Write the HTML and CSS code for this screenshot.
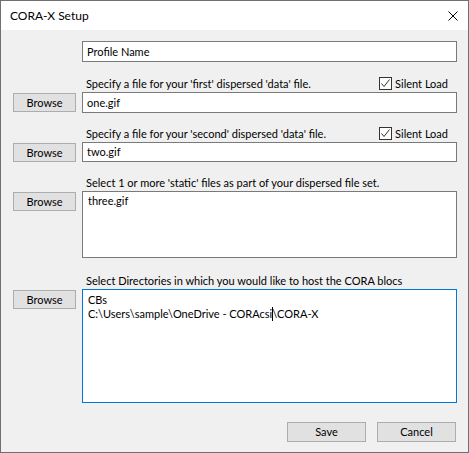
FILE: index.html
```html
<!DOCTYPE html>
<html>
<head>
<meta charset="utf-8">
<link rel="stylesheet" href="styles.css">
</head>
<body>
<div class="window">
  <div class="titlebar">
    <span class="title">CORA-X Setup</span>
    <svg class="close" width="10" height="10" viewBox="0 0 10 10"><path d="M0.5 0.5 L9.5 9.5 M9.5 0.5 L0.5 9.5" stroke="#000" stroke-width="1" fill="none"/></svg>
  </div>
  <div class="content">
    <div class="row">
      <div></div>
      <div class="field h21">Profile Name</div>
    </div>

    <div class="section s1">
      <div class="label-row">
        <span class="label">Specify a file for your 'first' dispersed 'data' file.</span>
        <span class="chk"><span class="box"><svg width="11" height="11" viewBox="0 0 11 11"><path d="M1.5 5.5 L4 8.5 L9.5 1.5" stroke="#333" stroke-width="1" fill="none"/></svg></span>Silent Load</span>
      </div>
      <div class="row">
        <div class="btn browse">Browse</div>
        <div class="field h21">one.gif</div>
      </div>
    </div>

    <div class="section s2">
      <div class="label-row">
        <span class="label">Specify a file for your 'second' dispersed 'data' file.</span>
        <span class="chk"><span class="box"><svg width="11" height="11" viewBox="0 0 11 11"><path d="M1.5 5.5 L4 8.5 L9.5 1.5" stroke="#333" stroke-width="1" fill="none"/></svg></span>Silent Load</span>
      </div>
      <div class="row">
        <div class="btn browse">Browse</div>
        <div class="field h20">two.gif</div>
      </div>
    </div>

    <div class="section s3">
      <div class="label-row">
        <span class="label">Select 1 or more 'static' files as part of your dispersed file set.</span>
      </div>
      <div class="row">
        <div class="btn browse">Browse</div>
        <div class="field area h67">three.gif</div>
      </div>
    </div>

    <div class="section s4">
      <div class="label-row">
        <span class="label">Select Directories in which you would like to host the CORA blocs</span>
      </div>
      <div class="row">
        <div class="btn browse">Browse</div>
        <div class="field area focus h114">CBs<br>C:\Users\sample\OneDrive - CORAcsi<span class="caret"></span>\CORA-X</div>
      </div>
    </div>

    <div class="footer">
      <div class="btn action">Save</div>
      <div class="btn action">Cancel</div>
    </div>
  </div>
</div>
</body>
</html>
```

FILE: styles.css
```css
html, body {
  margin: 0;
  padding: 0;
  background: #f0f0f0;
}
body {
  font-family: "Lato", "Noto Sans", sans-serif;
  font-size: 11px;
  color: #000;
}
.window {
  width: 469px;
  height: 453px;
  box-sizing: border-box;
  border: 1px solid #707070;
  background: #f0f0f0;
  display: flex;
  flex-direction: column;
}
.titlebar {
  height: 29px;
  background: #fff;
  display: flex;
  align-items: center;
  justify-content: space-between;
  padding: 0 10px 0 9px;
  flex-shrink: 0;
}
.title {
  font-size: 12px;
  line-height: 16px;
}
.close {
  display: block;
}
.content {
  padding: 11px 11px 0 12px;
  display: flex;
  flex-direction: column;
}
.row {
  display: grid;
  grid-template-columns: 63px 1fr;
  column-gap: 6px;
  align-items: start;
}
.field {
  box-sizing: border-box;
  background: #fff;
  border: 1px solid #7a7a7a;
  padding: 0 4px;
  line-height: 19px;
  white-space: nowrap;
}
.h21 { height: 21px; }
.h20 { height: 20px; line-height: 18px; }
.field.area {
  padding: 2px 5px;
  line-height: 14px;
}
.h67 { height: 67px; }
.h114 { height: 114px; }
.field.focus {
  border-color: #0078d7;
  padding-top: 3px;
}
.caret {
  display: inline-block;
  width: 1px;
  height: 14px;
  background: #000;
  vertical-align: -3px;
  margin-right: -1px;
}
.btn {
  box-sizing: border-box;
  background: #e1e1e1;
  border: 1px solid #adadad;
  text-align: center;
}
.browse {
  height: 19px;
  line-height: 17px;
  margin-top: 1px;
}
.section { display: flex; flex-direction: column; }
.s1 { margin-top: 13px; }
.s2 { margin-top: 12px; }
.s3 { margin-top: 12px; }
.s4 { margin-top: 14px; }
.label-row {
  height: 17px;
  margin-left: 69px;
  padding: 0 9px 0 4px;
  display: flex;
  align-items: center;
  justify-content: space-between;
  line-height: 17px;
  white-space: nowrap;
}
.chk {
  display: flex;
  align-items: center;
  gap: 3px;
}
.box {
  box-sizing: border-box;
  width: 13px;
  height: 13px;
  border: 1px solid #333;
  background: #fff;
  display: flex;
}
.box svg { display: block; }
.footer {
  margin-top: 19px;
  display: flex;
  justify-content: flex-end;
  gap: 11px;
  padding-right: 1px;
}
.action {
  width: 79px;
  height: 20px;
  line-height: 18px;
}
```
